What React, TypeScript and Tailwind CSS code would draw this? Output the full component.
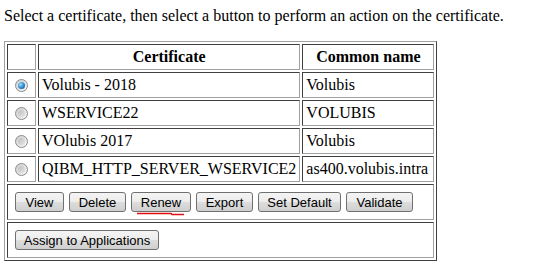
import React from "react";

const cell =
  "border border-solid border-t-[#404040] border-l-[#404040] border-r-[#a0a0a0] border-b-[#a0a0a0] p-[3px] leading-[18px]";

function Radio({ checked }: { checked?: boolean }) {
  return (
    <div className="mx-auto flex h-[13px] w-[13px] items-center justify-center rounded-full border border-solid border-[#8a8a8a] bg-[linear-gradient(135deg,#cfcfcf,#f6f6f6)]">
      {checked ? (
        <div className="h-[7px] w-[7px] rounded-full bg-[radial-gradient(circle_at_35%_35%,#9fe0ff,#2a84d2_55%,#0b4f8f)]" />
      ) : (
        <div className="h-[7px] w-[7px] rounded-full bg-[linear-gradient(135deg,#bdbdbd,#e6e6e6)]" />
      )}
    </div>
  );
}

function Btn({ label, w, children }: { label: string; w: string; children?: React.ReactNode }) {
  return (
    <div className="relative">
      <button
        className={`${w} flex h-[20px] items-center justify-center rounded-[3px] border border-solid border-[#707070] bg-[linear-gradient(#f4f4f4,#ececec_50%,#dddddd_50%,#cfcfcf)] text-[13px] leading-none text-black`}
        style={{ fontFamily: '"Liberation Sans", Arial, sans-serif' }}
      >
        {label}
      </button>
      {children}
    </div>
  );
}

const rows = [
  { cert: "Volubis - 2018", cn: "Volubis", checked: true },
  { cert: "WSERVICE22", cn: "VOLUBIS" },
  { cert: "VOlubis 2017", cn: "Volubis" },
  { cert: "QIBM_HTTP_SERVER_WSERVICE2", cn: "as400.volubis.intra" },
];

export default function App() {
  return (
    <div
      className="min-h-[280px] bg-white pl-[4px] pt-[7px] text-[16px] text-black"
      style={{ fontFamily: '"Liberation Serif", "Times New Roman", serif' }}
    >
      <p className="mb-[16px] leading-[18px]">
        Select a certificate, then select a button to perform an action on the certificate.
      </p>
      <table className="border-separate border-spacing-[2px] border border-solid border-t-[#a0a0a0] border-l-[#a0a0a0] border-r-[#404040] border-b-[#404040]">
        <thead>
          <tr>
            <th className={`${cell} w-[29px]`}></th>
            <th className={`${cell} w-[262px] text-center font-bold`}>Certificate</th>
            <th className={`${cell} w-[132px] text-center font-bold`}>Common name</th>
          </tr>
        </thead>
        <tbody>
          {rows.map((r) => (
            <tr key={r.cert}>
              <td className={`${cell} align-middle`}>
                <Radio checked={r.checked} />
              </td>
              <td className={`${cell} whitespace-nowrap`}>{r.cert}</td>
              <td className={`${cell} whitespace-nowrap`}>{r.cn}</td>
            </tr>
          ))}
          <tr>
            <td colSpan={3} className={`${cell} !py-[7px] !pl-[7px]`}>
              <div className="flex gap-[5px]">
                <Btn label="View" w="w-[49px]" />
                <Btn label="Delete" w="w-[57px]" />
                <Btn label="Renew" w="w-[60px]">
                  <svg
                    className="pointer-events-none absolute left-[6px] top-[20px]"
                    width="48"
                    height="4"
                    viewBox="0 0 48 4"
                  >
                    <polyline
                      points="0,1.5 34,1.5 35,2.5 47,2.5"
                      fill="none"
                      stroke="#e01010"
                      strokeWidth="1.6"
                    />
                  </svg>
                </Btn>
                <Btn label="Export" w="w-[57px]" />
                <Btn label="Set Default" w="w-[83px]" />
                <Btn label="Validate" w="w-[67px]" />
              </div>
            </td>
          </tr>
          <tr>
            <td colSpan={3} className={`${cell} !py-[7px] !pl-[7px]`}>
              <div className="flex">
                <Btn label="Assign to Applications" w="w-[144px]" />
              </div>
            </td>
          </tr>
        </tbody>
      </table>
    </div>
  );
}
